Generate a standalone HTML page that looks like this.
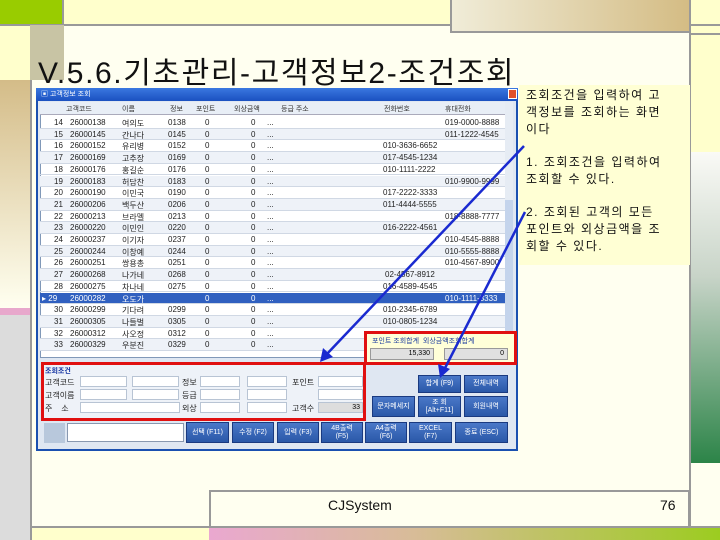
<!DOCTYPE html>
<html><head><meta charset="utf-8"><style>
*{margin:0;padding:0;box-sizing:border-box}
body{width:720px;height:540px;position:relative;overflow:hidden;background:#ffffcc;font-family:"Liberation Sans","Noto Sans CJK KR",sans-serif}
.a{position:absolute}
.k{font-family:"Liberation Sans","Noto Sans CJK KR",sans-serif}
.row{position:absolute;left:40px;width:465px;height:11.7px;font-size:8px;color:#222;border-bottom:1px solid #d0d8e4}
.row span{position:absolute;top:1px;white-space:nowrap}
.btn{position:absolute;background:linear-gradient(#4a78c8,#2a58a8);color:#fff;font-size:7px;text-align:center;border:1px solid #1a3a80;display:flex;align-items:center;justify-content:center;line-height:8px}
.inp{position:absolute;background:#fff;border:1px solid #b8c4d4;height:11px}
.lbl{position:absolute;font-size:8px;color:#222}
</style></head><body>
<div class="a" style="left:31px;top:25px;width:659px;height:502px;background:#fffff0"></div>
<div class="a" style="left:0;top:0;width:63px;height:24px;background:#99cc00"></div>
<div class="a" style="left:0;top:24px;width:720px;height:2px;background:#999"></div>
<div class="a" style="left:62px;top:0;width:2px;height:26px;background:#999"></div>
<div class="a" style="left:450px;top:0;width:240px;height:33px;background:linear-gradient(90deg,#f0ecd8,#d4bc84);border-bottom:2px solid #999;border-left:2px solid #999"></div>
<div class="a" style="left:30px;top:25px;width:34px;height:55px;background:#c8c4a4"></div>
<div class="a" style="left:0;top:80px;width:31px;height:228px;background:linear-gradient(#d4bc88,#fffff0)"></div>
<div class="a" style="left:0;top:308px;width:31px;height:7px;background:#e8a8cc"></div>
<div class="a" style="left:0;top:315px;width:30px;height:225px;background:#dcdcdc"></div>
<div class="a" style="left:30px;top:80px;width:2px;height:460px;background:#999"></div>
<div class="a" style="left:689px;top:0;width:2px;height:540px;background:#999"></div>
<div class="a" style="left:691px;top:33px;width:29px;height:2px;background:#999"></div>
<div class="a" style="left:691px;top:152px;width:29px;height:311px;background:linear-gradient(#fafaf6,#c8d4c8 40%,#2c8448)"></div>
<div class="a" style="left:691px;top:463px;width:29px;height:64px;background:#fffff0"></div>
<div class="a" style="left:31px;top:526px;width:689px;height:2px;background:#999"></div>
<div class="a" style="left:209px;top:490px;width:481px;height:37px;border:2px solid #999;border-bottom:none"></div>
<div class="a" style="left:209px;top:528px;width:511px;height:12px;background:linear-gradient(90deg,#eaa8d0,#d8bc98 40%,#9ccc20)"></div>
<div class="a" style="left:328px;top:497px;font-size:14px;color:#111">CJSystem</div>
<div class="a" style="left:660px;top:497px;font-size:14px;color:#111">76</div>
<div class="a k" style="left:38px;top:48px;font-size:30px;color:#111;letter-spacing:1.6px;white-space:nowrap">V.5.6.기초관리-고객정보2-조건조회</div>
<div class="a" style="left:519px;top:85px;width:171px;height:180px;background:#ffffd4"></div>
<div class="a k" style="left:526px;top:87px;font-size:12px;line-height:17px;color:#111;white-space:nowrap;letter-spacing:1.5px">
조회조건을 입력하여 고<br>객정보를 조회하는 화면<br>이다<br><div style="height:16px"></div>1. 조회조건을 입력하여<br>조회할 수 있다.<br><div style="height:16px"></div>2. 조회된 고객의 모든<br>포인트와 외상금액을 조<br>회할 수 있다.</div>
<div class="a" style="left:36px;top:88px;width:482px;height:363px;background:#dfe7f2;border:2px solid #1a50b0"></div>
<div class="a" style="left:36px;top:88px;width:482px;height:13px;background:linear-gradient(#3a78e0,#1a50c0)"></div>
<div class="a k" style="left:41px;top:89px;font-size:7px;color:#fff">▣ 고객정보 조회</div>
<div class="a" style="left:508px;top:89px;width:9px;height:10px;background:#e0502a;border:1px solid #fff"></div>
<div class="a" style="left:40px;top:102px;width:473px;height:256px;background:#fff;border:1px solid #8098b8"></div>
<div class="a" style="left:40px;top:102px;width:465px;height:13px;background:#e8eef6;border-bottom:1px solid #aab"></div>
<div class="a" style="left:505px;top:102px;width:8px;height:256px;background:#e6ecf4"></div>
<div class="a" style="left:505px;top:200px;width:8px;height:150px;background:#c4d4ec"></div>
<div class="a k" style="left:66px;top:104px;font-size:7px;color:#333">고객코드</div>
<div class="a k" style="left:122px;top:104px;font-size:7px;color:#333">이름</div>
<div class="a k" style="left:170px;top:104px;font-size:7px;color:#333">정보</div>
<div class="a k" style="left:196px;top:104px;font-size:7px;color:#333">포인트</div>
<div class="a k" style="left:234px;top:104px;font-size:7px;color:#333">외상금액</div>
<div class="a k" style="left:281px;top:104px;font-size:7px;color:#333">등급 주소</div>
<div class="a k" style="left:384px;top:104px;font-size:7px;color:#333">전화번호</div>
<div class="a k" style="left:445px;top:104px;font-size:7px;color:#333">휴대전화</div>
<div class="row" style="top:117px"><span style="left:14px">14</span><span style="left:30px">26000138</span><span style="left:82px">여의도</span><span style="left:128px">0138</span><span style="left:165px">0</span><span style="left:211px">0</span><span style="left:227px">...</span><span style="left:405px">019-0000-8888</span></div>
<div class="row" style="top:128.7px;background:#eef2f8"><span style="left:14px">15</span><span style="left:30px">26000145</span><span style="left:82px">간나다</span><span style="left:128px">0145</span><span style="left:165px">0</span><span style="left:211px">0</span><span style="left:227px">...</span><span style="left:405px">011-1222-4545</span></div>
<div class="row" style="top:140.4px"><span style="left:14px">16</span><span style="left:30px">26000152</span><span style="left:82px">유리병</span><span style="left:128px">0152</span><span style="left:165px">0</span><span style="left:211px">0</span><span style="left:227px">...</span><span style="left:343px">010-3636-6652</span></div>
<div class="row" style="top:152.1px;background:#eef2f8"><span style="left:14px">17</span><span style="left:30px">26000169</span><span style="left:82px">고추장</span><span style="left:128px">0169</span><span style="left:165px">0</span><span style="left:211px">0</span><span style="left:227px">...</span><span style="left:343px">017-4545-1234</span></div>
<div class="row" style="top:163.8px"><span style="left:14px">18</span><span style="left:30px">26000176</span><span style="left:82px">홍길순</span><span style="left:128px">0176</span><span style="left:165px">0</span><span style="left:211px">0</span><span style="left:227px">...</span><span style="left:343px">010-1111-2222</span></div>
<div class="row" style="top:175.5px;background:#eef2f8"><span style="left:14px">19</span><span style="left:30px">26000183</span><span style="left:82px">허담찬</span><span style="left:128px">0183</span><span style="left:165px">0</span><span style="left:211px">0</span><span style="left:227px">...</span><span style="left:405px">010-9900-9999</span></div>
<div class="row" style="top:187.2px"><span style="left:14px">20</span><span style="left:30px">26000190</span><span style="left:82px">이민국</span><span style="left:128px">0190</span><span style="left:165px">0</span><span style="left:211px">0</span><span style="left:227px">...</span><span style="left:343px">017-2222-3333</span></div>
<div class="row" style="top:198.9px;background:#eef2f8"><span style="left:14px">21</span><span style="left:30px">26000206</span><span style="left:82px">백두산</span><span style="left:128px">0206</span><span style="left:165px">0</span><span style="left:211px">0</span><span style="left:227px">...</span><span style="left:343px">011-4444-5555</span></div>
<div class="row" style="top:210.6px"><span style="left:14px">22</span><span style="left:30px">26000213</span><span style="left:82px">브라멜</span><span style="left:128px">0213</span><span style="left:165px">0</span><span style="left:211px">0</span><span style="left:227px">...</span><span style="left:405px">018-8888-7777</span></div>
<div class="row" style="top:222.3px;background:#eef2f8"><span style="left:14px">23</span><span style="left:30px">26000220</span><span style="left:82px">이민인</span><span style="left:128px">0220</span><span style="left:165px">0</span><span style="left:211px">0</span><span style="left:227px">...</span><span style="left:343px">016-2222-4561</span></div>
<div class="row" style="top:234px"><span style="left:14px">24</span><span style="left:30px">26000237</span><span style="left:82px">이기자</span><span style="left:128px">0237</span><span style="left:165px">0</span><span style="left:211px">0</span><span style="left:227px">...</span><span style="left:405px">010-4545-8888</span></div>
<div class="row" style="top:245.7px;background:#eef2f8"><span style="left:14px">25</span><span style="left:30px">26000244</span><span style="left:82px">이창예</span><span style="left:128px">0244</span><span style="left:165px">0</span><span style="left:211px">0</span><span style="left:227px">...</span><span style="left:405px">010-5555-8888</span></div>
<div class="row" style="top:257.4px"><span style="left:14px">26</span><span style="left:30px">26000251</span><span style="left:82px">쌍용총</span><span style="left:128px">0251</span><span style="left:165px">0</span><span style="left:211px">0</span><span style="left:227px">...</span><span style="left:405px">010-4567-8900</span></div>
<div class="row" style="top:269.1px;background:#eef2f8"><span style="left:14px">27</span><span style="left:30px">26000268</span><span style="left:82px">나가네</span><span style="left:128px">0268</span><span style="left:165px">0</span><span style="left:211px">0</span><span style="left:227px">...</span><span style="left:345px">02-4567-8912</span></div>
<div class="row" style="top:280.8px"><span style="left:14px">28</span><span style="left:30px">26000275</span><span style="left:82px">차나네</span><span style="left:128px">0275</span><span style="left:165px">0</span><span style="left:211px">0</span><span style="left:227px">...</span><span style="left:343px">016-4589-4545</span></div>
<div class="row" style="top:292.5px;background:#3060c0;color:#fff"><span style="left:2px">▸ 29</span><span style="left:30px">26000282</span><span style="left:82px">오도가</span><span style="left:165px">0</span><span style="left:211px">0</span><span style="left:227px">...</span><span style="left:405px">010-1111-3333</span></div>
<div class="row" style="top:304.2px"><span style="left:14px">30</span><span style="left:30px">26000299</span><span style="left:82px">기다려</span><span style="left:128px">0299</span><span style="left:165px">0</span><span style="left:211px">0</span><span style="left:227px">...</span><span style="left:343px">010-2345-6789</span></div>
<div class="row" style="top:315.9px;background:#eef2f8"><span style="left:14px">31</span><span style="left:30px">26000305</span><span style="left:82px">나들벌</span><span style="left:128px">0305</span><span style="left:165px">0</span><span style="left:211px">0</span><span style="left:227px">...</span><span style="left:343px">010-0805-1234</span></div>
<div class="row" style="top:327.6px"><span style="left:14px">32</span><span style="left:30px">26000312</span><span style="left:82px">사오정</span><span style="left:128px">0312</span><span style="left:165px">0</span><span style="left:211px">0</span><span style="left:227px">...</span></div>
<div class="row" style="top:339.3px;background:#eef2f8"><span style="left:14px">33</span><span style="left:30px">26000329</span><span style="left:82px">우분진</span><span style="left:128px">0329</span><span style="left:165px">0</span><span style="left:211px">0</span><span style="left:227px">...</span></div>
<div class="a" style="left:364px;top:331px;width:153px;height:34px;background:#ffffd8;border:3px solid #e01010"></div>
<div class="a k" style="left:372px;top:336px;font-size:7px;color:#2040a0;white-space:nowrap">포인트 조회합계 &nbsp;외상금액조회합계</div>
<div class="a" style="left:370px;top:348px;width:64px;height:12px;background:#e0e0e0;border:1px solid #999;font-size:7px;text-align:right;padding-right:3px;line-height:10px">15,330</div>
<div class="a" style="left:444px;top:348px;width:64px;height:12px;background:#e0e0e0;border:1px solid #999;font-size:7px;text-align:right;padding-right:3px;line-height:10px">0</div>
<div class="a" style="left:41px;top:362px;width:325px;height:59px;border:3px solid #e01010;background:#eef2f8"></div>
<div class="a k" style="left:45px;top:366px;font-size:7px;color:#1030a0;font-weight:bold">조회조건</div>
<div class="lbl k" style="left:45px;top:377px">고객코드</div>
<div class="lbl k" style="left:45px;top:390px">고객이름</div>
<div class="lbl k" style="left:45px;top:403px">주 &nbsp; &nbsp;소</div>
<div class="inp" style="left:80px;top:376px;width:47px"></div><div class="inp" style="left:132px;top:376px;width:47px"></div>
<div class="inp" style="left:80px;top:389px;width:47px"></div><div class="inp" style="left:132px;top:389px;width:47px"></div>
<div class="inp" style="left:80px;top:402px;width:100px"></div>
<div class="lbl k" style="left:182px;top:377px">정보</div><div class="lbl k" style="left:182px;top:390px">등급</div><div class="lbl k" style="left:182px;top:403px">외상</div>
<div class="inp" style="left:200px;top:376px;width:40px"></div><div class="inp" style="left:247px;top:376px;width:40px"></div>
<div class="inp" style="left:200px;top:389px;width:40px"></div><div class="inp" style="left:247px;top:389px;width:40px"></div>
<div class="inp" style="left:200px;top:402px;width:40px"></div><div class="inp" style="left:247px;top:402px;width:40px"></div>
<div class="lbl k" style="left:292px;top:377px">포인트</div><div class="lbl k" style="left:292px;top:403px">고객수</div>
<div class="inp" style="left:318px;top:376px;width:45px"></div><div class="inp" style="left:318px;top:389px;width:45px"></div>
<div class="inp" style="left:318px;top:402px;width:45px;background:#ddd;font-size:7px;text-align:right;line-height:9px;padding-right:2px">33</div>
<div class="btn k" style="left:418px;top:375px;width:43px;height:18px">합계 (F9)</div>
<div class="btn k" style="left:464px;top:375px;width:44px;height:18px">전체내역</div>
<div class="btn k" style="left:372px;top:396px;width:43px;height:21px">문자메세지</div>
<div class="btn k" style="left:418px;top:396px;width:43px;height:21px">조 회<br>[Alt+F11]</div>
<div class="btn k" style="left:464px;top:396px;width:44px;height:21px">회원내역</div>
<div class="a" style="left:44px;top:423px;width:21px;height:20px;background:#b8c8dc"></div>
<div class="a" style="left:67px;top:423px;width:117px;height:19px;background:#fff;border:1px solid #8898b0"></div>
<div class="btn k" style="left:186px;top:422px;width:43px;height:21px">선택 (F11)</div>
<div class="btn k" style="left:232px;top:422px;width:42px;height:21px">수정 (F2)</div>
<div class="btn k" style="left:277px;top:422px;width:42px;height:21px">입력 (F3)</div>
<div class="btn k" style="left:321px;top:422px;width:42px;height:21px">4B출력<br>(F5)</div>
<div class="btn k" style="left:365px;top:422px;width:42px;height:21px">A4출력<br>(F6)</div>
<div class="btn k" style="left:409px;top:422px;width:43px;height:21px">EXCEL<br>(F7)</div>
<div class="btn k" style="left:455px;top:422px;width:53px;height:21px">종료 (ESC)</div>
<svg class="a" style="left:0;top:0" width="720" height="540">
<g stroke="#1a2ad0" stroke-width="2.5" fill="#1a2ad0">
<line x1="524" y1="146" x2="326" y2="355"/>
<polygon points="320,362 323,348 333,357" stroke="none"/>
<line x1="525" y1="212" x2="444" y2="370"/>
<polygon points="440,378 438,364 450,369" stroke="none"/>
</g></svg>
</body></html>
